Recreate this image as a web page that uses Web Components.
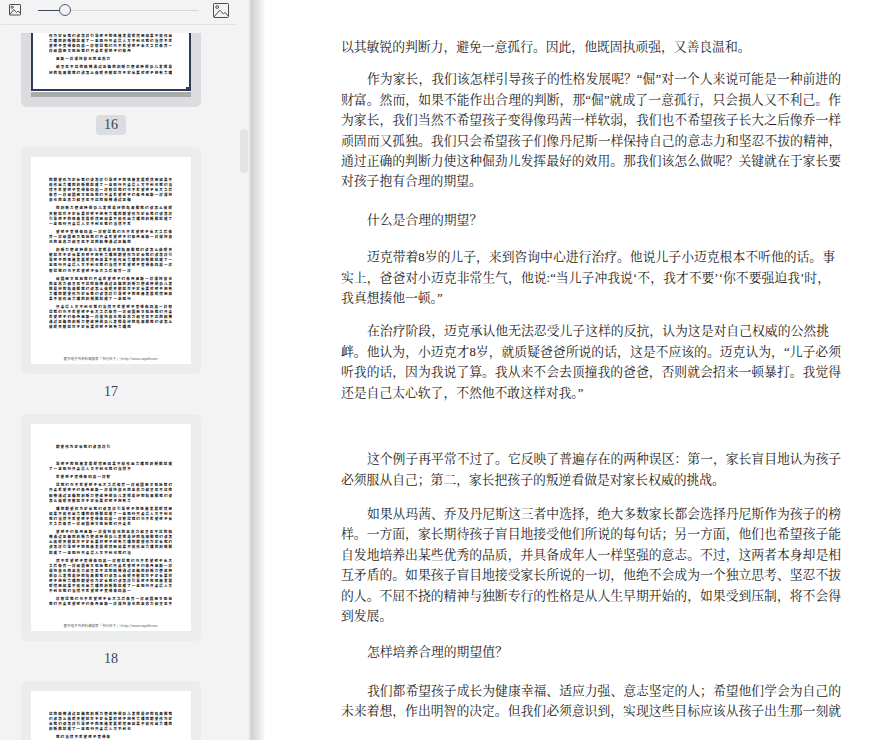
<!DOCTYPE html>
<html lang="zh-CN">
<head>
<meta charset="utf-8">
<title>PDF</title>
<style>
  html, body { margin: 0; height: 100%; overflow: hidden; background: #fff; }
  body { font-family: "Liberation Serif", "Noto Serif CJK SC", "Noto Sans CJK SC", serif; }
</style>
</head>
<body>

<pdf-viewer>
  <thumb-panel slot="side">
    <pdf-thumb number="16" selected>
      <thumb-para lines="4" style="margin-top:126px"></thumb-para>
      <thumb-para lines="1" short indent></thumb-para>
      <thumb-para lines="2" indent full></thumb-para>
    </pdf-thumb>
    <pdf-thumb number="17">
      <thumb-para lines="5"></thumb-para>
      <thumb-para lines="4" indent></thumb-para>
      <thumb-para lines="3" indent></thumb-para>
      <thumb-para lines="5" indent></thumb-para>
      <thumb-para lines="5" indent></thumb-para>
      <thumb-para lines="5" indent></thumb-para>
    </pdf-thumb>
    <pdf-thumb number="18">
      <thumb-para lines="1" short indent></thumb-para>
      <thumb-para lines="2" indent style="margin-top:12px"></thumb-para>
      <thumb-para lines="1" short indent></thumb-para>
      <thumb-para lines="4" indent></thumb-para>
      <thumb-para lines="4" indent></thumb-para>
      <thumb-para lines="5" indent></thumb-para>
      <thumb-para lines="7" indent></thumb-para>
      <thumb-para lines="2" indent full></thumb-para>
    </pdf-thumb>
    <pdf-thumb number="19">
      <thumb-para lines="4"></thumb-para>
      <thumb-para lines="1" short indent></thumb-para>
    </pdf-thumb>
  </thumb-panel>

  <pdf-para style="--gap:37px"><span class="end">以其敏锐的判断力，避免一意孤行。因此，他既固执顽强，又善良温和。</span></pdf-para>
  <pdf-para style="--gap:12px">
    <span class="start">作为家长，我们该怎样引导孩子的性格发展呢？“倔”对一个人来说可能是一种前进的</span>
    <span>财富。然而，如果不能作出合理的判断，那“倔”就成了一意孤行，只会损人又不利己。作</span>
    <span>为家长，我们当然不希望孩子变得像玛茜一样软弱，我们也不希望孩子长大之后像乔一样</span>
    <span style="letter-spacing:-.4px">顽固而又孤独。我们只会希望孩子们像丹尼斯一样保持自己的意志力和坚忍不拔的精神，</span>
    <span>通过正确的判断力使这种倔劲儿发挥最好的效用。那我们该怎么做呢？关键就在于家长要</span>
    <span class="end">对孩子抱有合理的期望。</span>
  </pdf-para>
  <pdf-para style="--gap:18px"><span class="start end">什么是合理的期望？</span></pdf-para>
  <pdf-para style="--gap:17px">
    <span class="start" style="margin-right:6px">迈克带着8岁的儿子，来到咨询中心进行治疗。他说儿子小迈克根本不听他的话。事</span>
    <span style="margin-right:11px">实上，爸爸对小迈克非常生气，他说:“当儿子冲我说‘不，我才不要’‘你不要强迫我’时，</span>
    <span class="end">我真想揍他一顿。”</span>
  </pdf-para>
  <pdf-para style="--gap:13px">
    <span class="start" style="margin-right:12px">在治疗阶段，迈克承认他无法忍受儿子这样的反抗，认为这是对自己权威的公然挑</span>
    <span>衅。他认为，小迈克才8岁，就质疑爸爸所说的话，这是不应该的。迈克认为，“儿子必须</span>
    <span>听我的话，因为我说了算。我从来不会去顶撞我的爸爸，否则就会招来一顿暴打。我觉得</span>
    <span class="end">还是自己太心软了，不然他不敢这样对我。”</span>
  </pdf-para>
  <pdf-para style="--gap:46px">
    <span class="start">这个例子再平常不过了。它反映了普遍存在的两种误区：第一，家长盲目地认为孩子</span>
    <span class="end">必须服从自己；第二，家长把孩子的叛逆看做是对家长权威的挑战。</span>
  </pdf-para>
  <pdf-para style="--gap:14px">
    <span class="start">如果从玛茜、乔及丹尼斯这三者中选择，绝大多数家长都会选择丹尼斯作为孩子的榜</span>
    <span>样。一方面，家长期待孩子盲目地接受他们所说的每句话；另一方面，他们也希望孩子能</span>
    <span>自发地培养出某些优秀的品质，并具备成年人一样坚强的意志。不过，这两者本身却是相</span>
    <span>互矛盾的。如果孩子盲目地接受家长所说的一切，他绝不会成为一个独立思考、坚忍不拔</span>
    <span>的人。不屈不挠的精神与独断专行的性格是从人生早期开始的，如果受到压制，将不会得</span>
    <span class="end">到发展。</span>
  </pdf-para>
  <pdf-para style="--gap:16px"><span class="start end">怎样培养合理的期望值？</span></pdf-para>
  <pdf-para style="--gap:18px">
    <span class="start">我们都希望孩子成长为健康幸福、适应力强、意志坚定的人；希望他们学会为自己的</span>
    <span>未来着想，作出明智的决定。但我们必须意识到，实现这些目标应该从孩子出生那一刻就</span>
  </pdf-para>
</pdf-viewer>

<script>
// text used for the tiny page previews
const PREVIEW_TEXT = "作为家长我们该怎样引导孩子的性格发展呢然而如果不能作出合理的判断那就成了一意孤行只会损人又不利己我们当然不希望孩子变得像玛茜一样软弱我们也不希望孩子长大之后像乔一样顽固而又孤独我们只会希望孩子们像丹尼斯一样保持自己的意志力和坚忍不拔的精神通过正确的判断力使这种倔劲儿发挥最好的效用那我们该怎么做呢关键就在于家长要对孩子抱有合理的期望";
let previewPos = 0;

function nextPreview(n) {
  let out = "";
  for (let i = 0; i < n; i++) {
    out += PREVIEW_TEXT[previewPos % PREVIEW_TEXT.length];
    previewPos++;
  }
  return out;
}

class ThumbPara extends HTMLElement {
  constructor() {
    super();
    this.attachShadow({ mode: "open" });
  }

  connectedCallback() {
    const count = Number(this.getAttribute("lines")) || 1;
    const indent = this.hasAttribute("indent");
    const short = this.hasAttribute("short");
    const full = this.hasAttribute("full");
    let html = `<style>
      :host { display: block; margin-top: 3px; font: bold 3.5px/5.1px "Noto Sans CJK SC", sans-serif; color: #000; }
      div { height: 5.1px; overflow: hidden; text-align-last: justify; }
      .in { padding-left: 7px; }
      .end { text-align-last: left; letter-spacing: 1.1px; }
    </style>`;
    for (let i = 0; i < count; i++) {
      const first = i === 0 && indent;
      const last = i === count - 1 && count > 1 && !full;
      const len = short ? 12 : last ? 18 : first ? 25 : 27;
      const cls = (first ? "in " : "") + (short || last ? "end" : "");
      html += `<div class="${cls}">${nextPreview(len)}</div>`;
    }
    this.shadowRoot.innerHTML = html;
  }
}

const thumbTpl = document.createElement("template");
thumbTpl.innerHTML = `<style>
  :host { display: flex; flex-direction: column; align-items: center; flex: none; }
  .card { width: 160px; padding: 10px; border-radius: 6px; background: #ebecee; }
  :host([selected]) .card { background: #dbdcdf; }
  .page { position: relative; height: 207px; box-sizing: border-box; padding: 17px 19px 2px 18px;
          background: #fff; display: flex; flex-direction: column; overflow: hidden; }
  .foot { margin-top: auto; text-align: center; white-space: nowrap; color: #555;
          font: 3.5px/6px "Noto Sans CJK SC", sans-serif; }
  .frame { display: none; }
  :host([selected]) .frame { display: block; position: absolute; left: 0; right: 0; bottom: 0; height: 6px;
          border-top: 2px solid #2f3b57; background: #a9aaaa; box-shadow: inset 0 1px 0 #fff; }
  :host([selected]) .page::before, :host([selected]) .page::after { content: ""; position: absolute; bottom: 6px; top: 0; width: 2px; background: #2f3b57; }
  :host([selected]) .page::before { left: 0; }
  :host([selected]) .page::after { right: 0; }
  .corner { display: none; }
  :host([selected]) .corner { display: block; position: absolute; right: 0; bottom: 6px; width: 5px; height: 4px; background: #2f3b57; }
  .num { margin: 8px 0 12px; height: 20px; min-width: 30px; box-sizing: border-box; border-radius: 4px; text-align: center;
         font: 14px/20px "Liberation Serif", serif; color: #3a4356; }
  :host([selected]) .num { background: #dcdde0; }
</style>
<div class="card">
  <div class="page">
    <slot></slot>
    <div class="foot">更多电子书资料请搜索「书行天下」| http://www.sxpdf.com</div>
    <div class="corner"></div>
    <div class="frame"></div>
  </div>
</div>
<div class="num"></div>`;

class PdfThumb extends HTMLElement {
  constructor() {
    super();
    this.attachShadow({ mode: "open" });
    this.shadowRoot.appendChild(thumbTpl.content.cloneNode(true));
  }

  connectedCallback() {
    this.shadowRoot.querySelector(".num").textContent = this.getAttribute("number");
  }
}

const panelTpl = document.createElement("template");
panelTpl.innerHTML = `<style>
  :host { display: flex; flex-direction: column; width: 249px; height: 100%; background: #f3f3f3; position: relative; overflow: hidden; flex: none; }
  .bar { flex: none; height: 24px; margin: 0 12px 0 1px; border-bottom: 1px solid #e2e2e2; display: flex; align-items: flex-start; }
  .bar svg { display: block; flex: none; fill: none; stroke: #4a4f5a; }
  .small { margin: 4px 0 0 8px; }
  .slider { width: 160px; margin: 4px 15px 0 17px; height: 12px; position: relative; flex: none;
            background: linear-gradient(#d6d6d6, #d6d6d6) center / 100% 1px no-repeat; }
  .slider::before { content: ""; position: absolute; left: 0; top: 5.5px; width: 22px; height: 1px; background: #3f4a60; }
  .knob { position: absolute; left: 21px; top: 0; width: 12px; height: 12px; box-sizing: border-box; border-radius: 50%;
          border: 1px solid #4b5d7c; background: #f3f3f3; }
  .large { margin-top: 3px; }
  .list { flex: 1; min-height: 0; margin-top: 8px; overflow: hidden; }
  .scroll { margin-top: -153px; display: flex; flex-direction: column; align-items: stretch; padding: 0 48px 0 21px; }
  .sb { position: absolute; left: 240px; top: 129px; width: 8px; height: 44px; border-radius: 4px; background: #e3e4e6; }
</style>
<div class="bar">
  <svg class="small" width="12" height="12" viewBox="0 0 12 12">
    <rect x=".5" y=".5" width="11" height="10.5" rx=".6"/>
    <circle cx="3.2" cy="3.2" r="1.1"/>
    <path d="M.8 10.4 4.8 5.6 7.6 8.6 9.2 7 11.2 9.2"/>
  </svg>
  <div class="slider"><div class="knob"></div></div>
  <svg class="large" width="16" height="15" viewBox="0 0 16 15">
    <rect x=".5" y=".5" width="15" height="14" rx=".8"/>
    <circle cx="4.2" cy="4" r="1.4"/>
    <path d="M1 14 6.8 7.2 10.4 11 12 9.4 15.2 13"/>
  </svg>
</div>
<div class="list"><div class="scroll"><slot></slot></div></div>
<div class="sb"></div>`;

class ThumbPanel extends HTMLElement {
  constructor() {
    super();
    this.attachShadow({ mode: "open" });
    this.shadowRoot.appendChild(panelTpl.content.cloneNode(true));
  }
}

const paraTpl = document.createElement("template");
paraTpl.innerHTML = `<style>
  :host { display: block; margin-top: var(--gap, 13px); }
  ::slotted(span) { display: block; text-align: justify; text-align-last: justify; }
  ::slotted(.start) { text-indent: 26px; }
  ::slotted(.end) { text-align-last: left; }
</style>
<slot></slot>`;

class PdfPara extends HTMLElement {
  constructor() {
    super();
    this.attachShadow({ mode: "open" });
    this.shadowRoot.appendChild(paraTpl.content.cloneNode(true));
  }
}

const viewerTpl = document.createElement("template");
viewerTpl.innerHTML = `<style>
  :host { display: flex; width: 895px; height: 740px; overflow: hidden; background: #fff; }
  .split { flex: none; width: 16px; box-sizing: border-box; border-left: 2px solid #dcdde1;
           background: linear-gradient(90deg, #cfcfcf, #f6f6f6 90%, #fff); }
  .doc { flex: 1; min-width: 0; padding: 0 54px 0 76px; overflow: hidden;
         font-size: 12.8px; line-height: 20.4px; color: #1c1c1c; }
</style>
<slot name="side"></slot>
<div class="split"></div>
<div class="doc"><slot></slot></div>`;

class PdfViewer extends HTMLElement {
  constructor() {
    super();
    this.attachShadow({ mode: "open" });
    this.shadowRoot.appendChild(viewerTpl.content.cloneNode(true));
  }
}

window.customElements.define("thumb-para", ThumbPara);
window.customElements.define("pdf-thumb", PdfThumb);
window.customElements.define("thumb-panel", ThumbPanel);
window.customElements.define("pdf-para", PdfPara);
window.customElements.define("pdf-viewer", PdfViewer);
</script>
</body>
</html>
